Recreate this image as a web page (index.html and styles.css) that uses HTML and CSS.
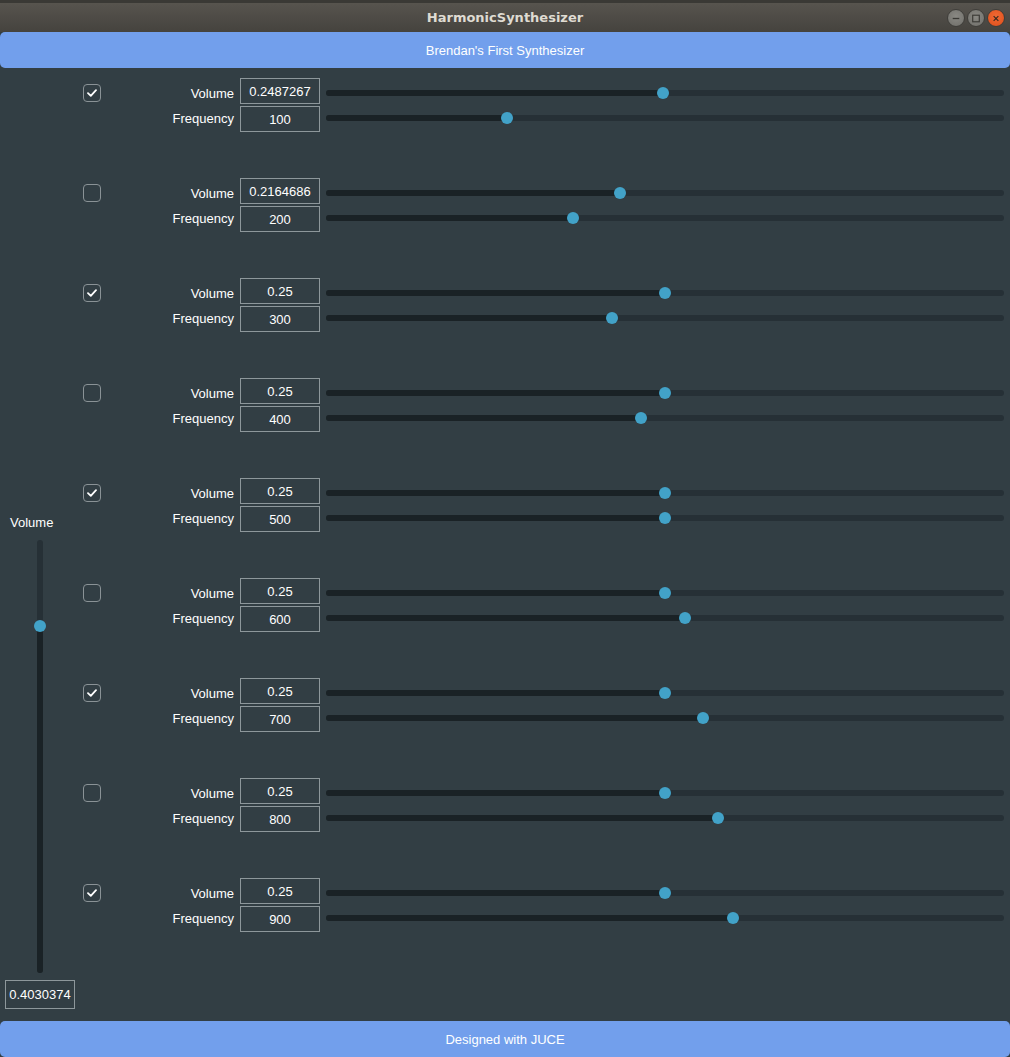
FILE: index.html
```html
<!DOCTYPE html>
<html>
<head>
<meta charset="utf-8">
<link rel="stylesheet" href="styles.css">
</head>
<body>
<div class="window">
  <div class="titlebar">
    <span class="title">HarmonicSynthesizer</span>
    <div class="winbtns">
      <span class="wb wb-min"><svg width="17" height="17" viewBox="0 0 17 17"><line x1="5" y1="8.5" x2="12" y2="8.5" stroke="#3a3935" stroke-width="1.4"/></svg></span>
      <span class="wb wb-max"><svg width="17" height="17" viewBox="0 0 17 17"><rect x="5" y="5" width="7" height="7" fill="none" stroke="#3a3935" stroke-width="1.2"/></svg></span>
      <span class="wb wb-close"><svg width="17" height="17" viewBox="0 0 17 17"><path d="M6 6 L11 11 M11 6 L6 11" stroke="#3a2a20" stroke-width="1.3"/></svg></span>
    </div>
  </div>
  <div class="banner">Brendan's First Synthesizer</div>
  <div class="main">
    <div class="left">
      <div class="left-label">Volume</div>
      <div class="vtrack">
        <div class="vfill" style="height:347px"></div>
        <div class="vthumb" style="top:80px"></div>
      </div>
      <div class="valbox">0.4030374</div>
    </div>
    <div class="rows" id="rows"></div>
  </div>
  <div class="banner footer">Designed with JUCE</div>
</div>
<script src="app.js"></script>
</body>
</html>
```
FILE: app.js
```js
var data = [
  [true, "0.2487267", 337, "100", 181],
  [false, "0.2164686", 294, "200", 247],
  [true, "0.25", 339, "300", 286],
  [false, "0.25", 339, "400", 315],
  [true, "0.25", 339, "500", 339],
  [false, "0.25", 339, "600", 359],
  [true, "0.25", 339, "700", 377],
  [false, "0.25", 339, "800", 392],
  [true, "0.25", 339, "900", 407]
];
var check = '<svg width="10" height="8" viewBox="0 0 10 8"><path d="M1 4.2 L3.8 6.8 L9 1.2" fill="none" stroke="#ffffff" stroke-width="1.8" stroke-linecap="round" stroke-linejoin="round"/></svg>';
function slider(x) {
  return '<div class="track"><div class="fill" style="width:' + x + 'px"></div><div class="thumb" style="left:' + (x - 6) + 'px"></div></div>';
}
var html = '';
data.forEach(function (d) {
  html += '<div class="row">' +
    '<div class="cb">' + (d[0] ? check : '') + '</div>' +
    '<div class="ctrl">' +
      '<div class="lbl">Volume</div><div class="box box-a">' + d[1] + '</div><div class="sl">' + slider(d[2]) + '</div>' +
      '<div class="lbl">Frequency</div><div class="box box-b">' + d[3] + '</div><div class="sl">' + slider(d[4]) + '</div>' +
    '</div></div>';
});
document.getElementById('rows').innerHTML = html;
```
FILE: styles.css
```css
* { box-sizing: border-box; }
html, body { margin: 0; padding: 0; }
body {
  width: 1010px;
  height: 1057px;
  overflow: hidden;
  background: #323e44;
  font-family: "Liberation Sans", Arial, sans-serif;
  font-size: 13px;
  color: #ffffff;
}
.window { display: flex; flex-direction: column; width: 1010px; height: 1057px; }
.titlebar {
  height: 32px;
  flex: none;
  position: relative;
  display: flex;
  align-items: center;
  justify-content: center;
  background: linear-gradient(#3a3935 0, #3a3935 3px, #57544e 3px, #4f4c47 16px, #45433e 32px);
}
.title {
  font-family: "DejaVu Sans", sans-serif;
  font-weight: bold;
  font-size: 13px;
  color: #dfdbd2;
  padding-top: 3px;
}
.winbtns {
  position: absolute;
  right: 5px;
  top: 9px;
  display: flex;
  gap: 2px;
}
.wb {
  width: 18px;
  height: 18px;
  border-radius: 50%;
  display: flex;
  align-items: center;
  justify-content: center;
}
.wb-min, .wb-max { background: radial-gradient(circle at 50% 40%, #8a8984, #6f6e69); border: 1px solid #3f3e3a; }
.wb-close { background: radial-gradient(circle at 50% 40%, #f06a35, #df4e1a); border: 1px solid #3f3e3a; }
.banner {
  height: 36px;
  flex: none;
  background: #729fec;
  border-radius: 5px;
  display: flex;
  align-items: center;
  justify-content: center;
  color: #ffffff;
  font-size: 13px;
}
.main { height: 953px; flex: none; display: flex; }
.left { width: 80px; flex: none; display: flex; flex-direction: column; }
.left-label { margin-top: 446px; height: 16px; line-height: 16px; padding-left: 10px; padding-top: 1px; }
.vtrack {
  margin-top: 10px;
  margin-left: 37px;
  width: 6px;
  height: 433px;
  border-radius: 3px;
  background: #263036;
  position: relative;
}
.vfill {
  position: absolute;
  left: 0; right: 0; bottom: 0;
  background: #1a2226;
  border-radius: 3px;
}
.vthumb {
  position: absolute;
  left: -3px;
  width: 12px;
  height: 12px;
  border-radius: 50%;
  background: #42a2c8;
}
.valbox {
  margin-top: 7px;
  margin-left: 5px;
  width: 70px;
  height: 29px;
  border: 1px solid #8d979b;
  display: flex;
  align-items: center;
  justify-content: center;
}
.rows { flex: 1; padding-top: 12px; }
.row { height: 100px; display: flex; }
.cb {
  margin-left: 3px;
  margin-top: 4px;
  width: 18px;
  height: 18px;
  border: 1.5px solid #8a9296;
  border-radius: 4px;
  display: flex;
  align-items: center;
  justify-content: center;
  flex: none;
}
.ctrl {
  flex: 1;
  display: grid;
  grid-template-columns: 1fr 80px 678px;
  grid-template-rows: 25px 25px;
  column-gap: 6px;
  align-content: start;
  padding-right: 6px;
}
.lbl { text-align: right; line-height: 25px; padding-top: 1px; }
.box {
  height: 26px;
  border: 1px solid #8d979b;
  display: flex;
  align-items: center;
  justify-content: center;
}
.box-a { margin-top: -2px; }
.box-b { margin-top: 1px; }
.sl { display: flex; align-items: center; padding-top: 1px; }
.track {
  position: relative;
  width: 678px;
  height: 6px;
  border-radius: 3px;
  background: #263036;
}
.fill {
  position: absolute;
  left: 0; top: 0; bottom: 0;
  background: #1a2226;
  border-radius: 3px;
}
.thumb {
  position: absolute;
  top: -3px;
  width: 12px;
  height: 12px;
  border-radius: 50%;
  background: #42a2c8;
}
```
